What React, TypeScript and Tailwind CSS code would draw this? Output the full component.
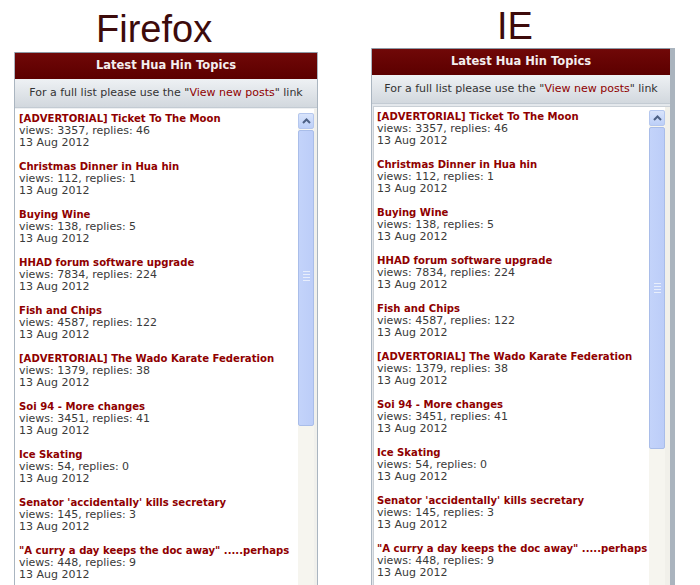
import React from "react";

const items: [string, string][] = [
  ["[ADVERTORIAL] Ticket To The Moon", "views: 3357, replies: 46"],
  ["Christmas Dinner in Hua hin", "views: 112, replies: 1"],
  ["Buying Wine", "views: 138, replies: 5"],
  ["HHAD forum software upgrade", "views: 7834, replies: 224"],
  ["Fish and Chips", "views: 4587, replies: 122"],
  ["[ADVERTORIAL] The Wado Karate Federation", "views: 1379, replies: 38"],
  ["Soi 94 - More changes", "views: 3451, replies: 41"],
  ["Ice Skating", "views: 54, replies: 0"],
  ["Senator 'accidentally' kills secretary", "views: 145, replies: 3"],
  ["\"A curry a day keeps the doc away\" .....perhaps", "views: 448, replies: 9"],
];

function Chevron() {
  return (
    <svg width="9" height="6" viewBox="0 0 9 6">
      <path d="M1 5 L4.5 1.5 L8 5" fill="none" stroke="#4d6185" strokeWidth="2" />
    </svg>
  );
}

function Scrollbar({ thumb, gripAt }: { thumb: number; gripAt: number }) {
  return (
    <div className="flex w-[16px] flex-col bg-[#f6f5ef]">
      <div className="flex h-[16px] shrink-0 items-center justify-center rounded-[2px] border border-[#b5c7ee] bg-gradient-to-b from-[#d9e4fb] to-[#bccff8]">
        <Chevron />
      </div>
      <div
        className="mt-[1px] flex shrink-0 flex-col items-center rounded-[2px] border border-[#a9bde9] bg-gradient-to-r from-[#c3d3fa] to-[#bccdf8]"
        style={{ height: thumb }}
      >
        <div className="flex flex-col gap-[2px]" style={{ marginTop: gripAt }}>
          <div className="h-px w-[7px] bg-[#e8eefc]" />
          <div className="h-px w-[7px] bg-[#e8eefc]" />
          <div className="h-px w-[7px] bg-[#e8eefc]" />
          <div className="h-px w-[7px] bg-[#e8eefc]" />
        </div>
      </div>
    </div>
  );
}

function Item({ t, m }: { t: string; m: string }) {
  return (
    <div className="mb-[12px] whitespace-nowrap leading-[12px]">
      <div className="text-[10.1px] font-bold text-[#8f0000]">{t}</div>
      <div className="text-[11px] text-[#3a3a3a]">{m}</div>
      <div className="text-[11px] text-[#3a3a3a]">13 Aug 2012</div>
    </div>
  );
}

function Header() {
  return (
    <>
      <div className="flex h-[27px] shrink-0 items-center justify-center border-t border-[#8d99a5] bg-gradient-to-b from-[#700808] to-[#5c0000] text-[11.5px] font-bold text-[#f4eeee]">
        Latest Hua Hin Topics
      </div>
      <div className="flex h-[29px] shrink-0 items-center justify-center whitespace-nowrap border-b border-[#c3cbd3] bg-gradient-to-b from-[#eef1f4] to-[#d2d8de] text-[11px] text-[#333]">
        For a full list please use the "<span className="text-[#8f0000]">View new posts</span>" link
      </div>
    </>
  );
}

export default function App() {
  return (
    <div
      className="flex h-[585px] w-[700px] overflow-hidden bg-white"
      style={{ fontFamily: '"DejaVu Sans", Verdana, sans-serif' }}
    >
      {/* Firefox column */}
      <div className="ml-[14px] flex h-[585px] w-[304px] flex-col">
        <div
          className="h-[52px] shrink-0 pl-[82px] pt-[7px] text-[38px] leading-[44px] text-[#3d0b0b]"
          style={{ fontFamily: '"Liberation Sans", Arial, sans-serif' }}
        >
          Firefox
        </div>
        <div className="flex min-h-0 flex-1 flex-col border-x border-[#aab5c0]">
          <Header />
          <div className="flex min-h-0 flex-1 overflow-hidden bg-[#eef0f2] pt-[1px]">
            <div className="flex-1 overflow-hidden bg-white pl-[4px] pt-[4px]">
              {items.map(([t, m]) => (
                <Item key={t} t={t} m={m} />
              ))}
            </div>
            <div className="flex bg-white pt-[4px]">
              <Scrollbar thumb={296} gripAt={140} />
            </div>
            <div className="w-[3px] bg-[#f0f0ec]" />
          </div>
        </div>
      </div>

      {/* IE column */}
      <div className="ml-[53px] flex h-[585px] w-[304px] flex-col">
        <div
          className="h-[48px] shrink-0 pl-[126px] pt-[4px] text-[38px] leading-[44px] text-[#3d0b0b]"
          style={{ fontFamily: '"Liberation Sans", Arial, sans-serif' }}
        >
          IE
        </div>
        <div className="flex min-h-0 flex-1 flex-col border-l border-r-[5px] border-l-[#aab5c0] border-r-[#aab4be]">
          <Header />
          <div className="flex min-h-0 flex-1 overflow-hidden bg-[#e4e8ec] pl-[1px] pt-[2px]">
            <div className="flex flex-1 overflow-hidden border-l border-t border-[#c9cfd5] bg-white">
              <div className="flex-1 overflow-hidden pl-[3px] pt-[4px]">
                {items.map(([t, m]) => (
                  <Item key={t} t={t} m={m} />
                ))}
              </div>
              <div className="flex pt-[3px]">
                <Scrollbar thumb={322} gripAt={155} />
              </div>
              <div className="w-[5px] bg-[#f1f0ea]" />
            </div>
          </div>
        </div>
      </div>
    </div>
  );
}
